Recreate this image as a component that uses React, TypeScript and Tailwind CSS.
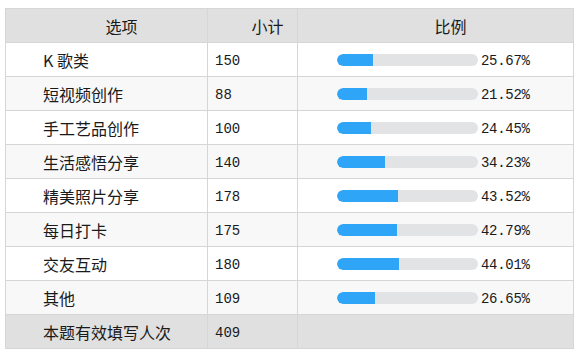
import React from "react";

const rows = [
  { name: "K 歌类", count: 150, pct: 25.67 },
  { name: "短视频创作", count: 88, pct: 21.52 },
  { name: "手工艺品创作", count: 100, pct: 24.45 },
  { name: "生活感悟分享", count: 140, pct: 34.23 },
  { name: "精美照片分享", count: 178, pct: 43.52 },
  { name: "每日打卡", count: 175, pct: 42.79 },
  { name: "交友互动", count: 180, pct: 44.01 },
  { name: "其他", count: 109, pct: 26.65 },
];

const font = { fontFamily: '"Noto Sans CJK SC", "Noto Sans", sans-serif' };
const mono = { fontFamily: '"Liberation Mono", monospace' };

export default function App() {
  return (
    <div className="w-[583px] h-[357px] bg-white pt-[8px] pl-[5px]" style={font}>
      <div className="w-[569px] border-l border-t border-[#d6d6d6] text-[#1a1a1a]">
        <div className="flex h-[34px] bg-[#e0e0e0] text-[16px] leading-none">
          <div className="w-[202px] border-r border-b border-[#d6d6d6] flex items-center justify-center pl-[30px]">选项</div>
          <div className="w-[90px] border-r border-b border-[#d6d6d6] flex items-center justify-center pl-[30px]">小计</div>
          <div className="w-[276px] border-r border-b border-[#d6d6d6] flex items-center justify-center pl-[30px]">比例</div>
        </div>
        {rows.map((r, i) => (
          <div key={r.name} className={`flex h-[34px] ${i % 2 === 1 ? "bg-[#f8f8f8]" : "bg-white"}`}>
            <div className="w-[202px] border-r border-b border-[#d6d6d6] flex items-center pl-[37px] text-[16px] leading-none">{r.name}</div>
            <div className="w-[90px] border-r border-b border-[#d6d6d6] flex items-center pl-[7px] pt-[3px] text-[14px] leading-none" style={mono}>{r.count}</div>
            <div className="w-[276px] border-r border-b border-[#d6d6d6] flex items-center pl-[39px]">
              <div className="w-[141px] h-[12px] rounded-full bg-[#e2e3e5] overflow-hidden">
                <div className="h-full bg-[#2ea5f6] rounded-l-full" style={{ width: `${(r.pct / 100) * 141}px` }} />
              </div>
              <span className="ml-[3px] pt-[3px] text-[14px] leading-none tracking-[-0.3px]" style={mono}>{r.pct.toFixed(2)}%</span>
            </div>
          </div>
        ))}
        <div className="flex h-[34px] bg-[#e0e0e0]">
          <div className="w-[202px] border-r border-b border-[#d6d6d6] flex items-center pl-[37px] text-[16px] leading-none">本题有效填写人次</div>
          <div className="w-[90px] border-r border-b border-[#d6d6d6] flex items-center pl-[7px] pt-[3px] text-[14px] leading-none" style={mono}>409</div>
          <div className="w-[276px] border-r border-b border-[#d6d6d6]" />
        </div>
      </div>
    </div>
  );
}
